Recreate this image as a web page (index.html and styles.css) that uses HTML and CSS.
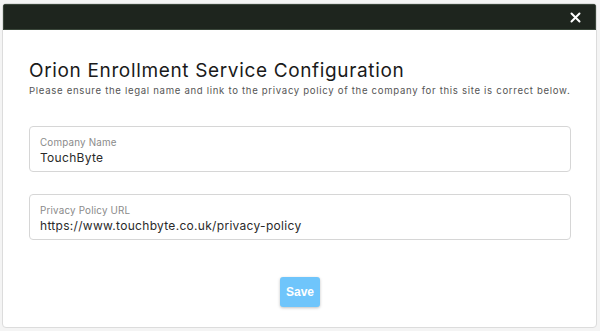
FILE: index.html
```html
<!DOCTYPE html>
<html lang="en">
<head>
  <meta charset="UTF-8" />
  <title>Orion Enrollment Service Configuration</title>
  <link rel="stylesheet" href="styles.css">
</head>
<body>

  <div class="modal">
    <div class="modal-header">
      <button class="close-btn" aria-label="Close">
        <svg width="11" height="11" viewBox="0 0 11 11">
          <path d="M1.5 1.5 L9.5 9.5 M9.5 1.5 L1.5 9.5" stroke="#fff" stroke-width="2" stroke-linecap="round"/>
        </svg>
      </button>
    </div>

    <div class="modal-body">
      <h1 class="title">Orion Enrollment Service Configuration</h1>
      <p class="subtitle">Please ensure the legal name and link to the privacy policy of the company for this site is correct below.</p>

      <div class="field">
        <label>Company Name</label>
        <div class="field-value">TouchByte</div>
      </div>

      <div class="field">
        <label>Privacy Policy URL</label>
        <div class="field-value">https://www.touchbyte.co.uk/privacy-policy</div>
      </div>

      <div class="actions">
        <button class="save-btn">Save</button>
      </div>
    </div>
  </div>

</body>
</html>
```

FILE: styles.css
```css
body {
  margin: 0;
  padding: 3px 3px 3px 2px;
  background: #f4f4f4;
  font-family: Inter, "DejaVu Sans", sans-serif;
}

.modal {
  width: 595px;
  height: 325px;
  background: white;
  border: 1px solid #dcdcdc;
  border-radius: 4px;
  box-sizing: border-box;
  overflow: hidden;
  display: flex;
  flex-direction: column;
}

.modal-header {
  height: 26px;
  flex-shrink: 0;
  background: #1e251e;
  border: 1px solid #3a463a;
  box-sizing: border-box;
  display: flex;
  justify-content: flex-end;
  align-items: center;
  padding-right: 14px;
}

.close-btn {
  background: none;
  border: none;
  padding: 0;
  display: flex;
  cursor: pointer;
}

.modal-body {
  padding: 0 25px 0 26px;
}

.title {
  margin: 29px 0 0;
  font-size: 19px;
  font-weight: 400;
  color: #1a1a1a;
  letter-spacing: 0.65px;
}

.subtitle {
  margin: 3px 0 0;
  font-size: 9.6px;
  color: #555;
  letter-spacing: 0.68px;
}

.field {
  margin-top: 30px;
  height: 46px;
  flex-shrink: 0;
  border: 1px solid #d6d6d6;
  border-radius: 4px;
  box-sizing: border-box;
  padding: 10px 10px 0;
}

.field + .field {
  margin-top: 22px;
}

.field label {
  display: block;
  font-size: 9.8px;
  color: #8a8a8a;
  letter-spacing: 0.2px;
}

.field-value {
  margin-top: 2px;
  font-size: 12px;
  color: #2a2a2a;
  letter-spacing: 0.3px;
}

.actions {
  display: flex;
  justify-content: center;
  margin-top: 37px;
}

.save-btn {
  width: 40px;
  height: 30px;
  background: #6fc5fb;
  color: white;
  font-family: "Liberation Sans", Arial, sans-serif;
  font-weight: bold;
  font-size: 12px;
  border: none;
  border-radius: 3px;
  box-shadow: 0 1px 3px rgba(0,0,0,0.25);
  padding: 0;
  cursor: pointer;
}
```
